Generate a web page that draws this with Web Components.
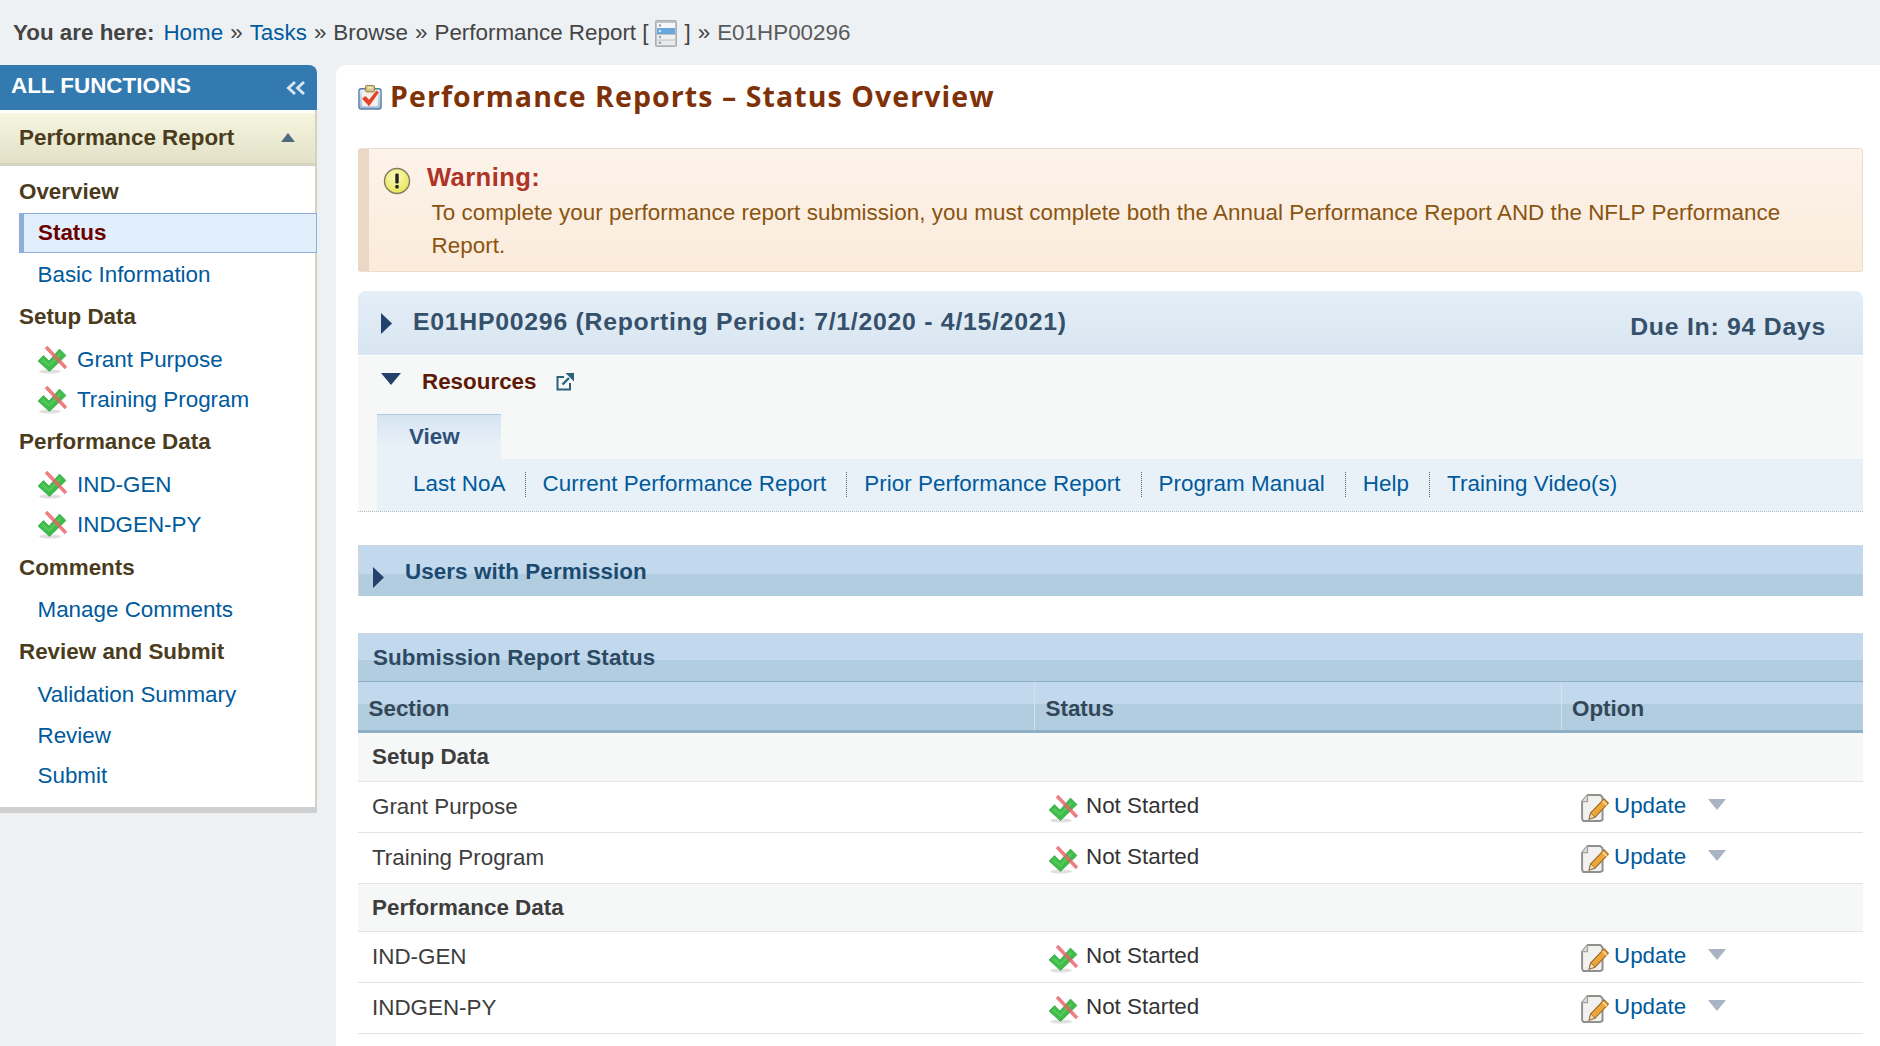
<!DOCTYPE html>
<html lang="en"><head><meta charset="utf-8"><title>Performance Reports</title>
<style>
html,body{margin:0;height:100%}
body{background:#edf1f4;font:22.4px/1.3 "Liberation Sans",Arial,sans-serif;color:#3b3b3b;overflow:hidden}
</style></head><body>
<app-page></app-page>
<script>
const ICONS={
 status:`<svg viewBox="0 0 30 28" width="30" height="28" style="filter:blur(.3px)"><ellipse cx="13" cy="25.500" rx="11" ry="2" fill="#000" opacity=".12"/><path d="M1 15l5.500-5.500 5.500 5.500L22.500 3l6.500 6.500L12.500 25.500z" fill="#3cbc49" stroke="#2f9a3c" stroke-width=".6"/><path d="M4 15l2.500-2.500 5.500 5.500L22.500 6.500l2 2L12.500 21z" fill="#5ccc5e" opacity=".7"/><path d="M9 1l20 21" stroke="#e8636a" stroke-width="3.600" opacity=".82"/></svg>`,
 edit:`<svg viewBox="2 1 26 26" width="28" height="28"><path d="M8 2h12l2 2v21l-2 1H4l-1-2V8z" fill="#f1f1ef" stroke="#8f8f8b" stroke-width="1.8" stroke-linejoin="round"/><path d="M8 2v6H3" fill="#ddd" stroke="#a2a29e" stroke-width="1.2"/><path d="M11 18.500l12.500-13 4 4-12.500 13-5.500 1.700z" fill="#eca63a" stroke="#9c6b2a" stroke-width="1"/><path d="M9.500 24.500l1.500-6 4 4z" fill="#f3dcb5" stroke="#8b6a3a" stroke-width=".8"/><path d="M22 7.500l4 4" stroke="#fbe1a6" stroke-width="1.300"/></svg>`,
 clip:`<svg viewBox="0 0 26 28" width="24" height="26"><defs><linearGradient id="cb" x1="0" y1="0" x2="0" y2="1"><stop offset="0" stop-color="#e3ecf6"/><stop offset="1" stop-color="#9db8d8"/></linearGradient></defs><rect x="1" y="5" width="24" height="22" rx="2.500" fill="url(#cb)" stroke="#5a7fa6" stroke-width="1.500"/><rect x="4.500" y="7" width="17" height="17" fill="#f8f0ea"/><rect x="8" y="1.500" width="10" height="7" rx="1.500" fill="#d7c27e" stroke="#8a7a45"/><rect x="10.500" y="3" width="5" height="2" fill="#f4ebc7"/><path d="M4.500 16l3.500-3 4 4 8-10 2.500 2-10.500 15z" fill="#e2412a"/></svg>`,
 warn:`<svg viewBox="0 0 28 28" width="28" height="28"><defs><radialGradient id="w" cx=".45" cy=".35" r=".7"><stop offset="0" stop-color="#fbfbc0"/><stop offset="1" stop-color="#e7e34f"/></radialGradient></defs><circle cx="14" cy="14" r="12.500" fill="url(#w)" stroke="#7d7d62" stroke-width="1.400"/><rect x="12.300" y="6.500" width="3.400" height="10" rx="1.200" fill="#222"/><rect x="12.300" y="18" width="3.400" height="3.400" rx="1" fill="#222"/></svg>`,
 list:`<svg viewBox="0 0 22 27" width="22" height="27"><rect x=".5" y=".5" width="21" height="26" rx="1" fill="#bcc2c6" stroke="#a8aeb2"/><rect x="2" y="3" width="18" height="5" fill="#f6f7f8"/><rect x="2" y="8" width="18" height="6" fill="#67a6de"/><rect x="2" y="15" width="18" height="4.500" fill="#eef0f1"/><rect x="2" y="20.500" width="18" height="4.500" fill="#e8eaeb"/><g fill="#9aa0a4"><circle cx="5" cy="5.500" r="1.200"/><circle cx="5" cy="11" r="1.200" fill="#dbe9f6"/><circle cx="5" cy="17" r="1.200"/><circle cx="5" cy="22.700" r="1.200"/></g></svg>`,
 ext:`<svg viewBox="0 0 18 18" width="18" height="18"><path d="M8 4H1.500v12.500H14V10" fill="none" stroke="#2b6179" stroke-width="2"/><path d="M6.500 11.500L13 5" stroke="#2b6179" stroke-width="2.400"/><path d="M9.500 0H18v8.500z" fill="#2b6179"/></svg>`,
 right:`<svg viewBox="0 0 11 21" width="11" height="21"><path d="M0 0l11 10.500L0 21z" fill="#24416b"/></svg>`,
 down:`<svg viewBox="0 0 20 12" width="20" height="12"><path d="M0 0h20L10 12z" fill="#24416b"/></svg>`,
 up:`<svg viewBox="0 0 14 9" width="14" height="9"><path d="M7 0l7 9H0z" fill="#4f6a80"/></svg>`,
 caret:`<svg viewBox="0 0 18 11" width="18" height="11"><path d="M0 0h18L9 11z" fill="#a8b3c3"/></svg>`,
 dbl:`<svg viewBox="0 0 20 14" width="20" height="14"><path d="M9 1L2.500 7 9 13M18 1l-6.500 6 6.500 6" fill="none" stroke="#dbe7f1" stroke-width="2.800"/></svg>`
};
function def(name,css,html){
  customElements.define(name,class extends HTMLElement{
    constructor(){super();const s=this.attachShadow({mode:'open'});
      s.innerHTML=`<style>${css}</style>`+(typeof html==='function'?html(this):html);}
  });
}
def('x-icon',`:host{display:inline-flex;flex:none;line-height:0}`,el=>ICONS[el.getAttribute('name')]||'');

def('bread-crumb',`:host{display:flex;align-items:center;height:65px;padding:1px 0 0 13px;box-sizing:border-box;white-space:pre;color:#444}
 b{color:#444;margin-right:9px} a{color:#005a9c} .s{margin:0 7px 0 7px} x-icon{margin:0 8px 0 6px}`,
 `<b>You are here:</b><a>Home</a><span class="s">»</span><a>Tasks</a><span class="s">»</span><span>Browse</span><span class="s">»</span><span>Performance Report [</span><x-icon name="list"></x-icon><span>]</span><span class="s">»</span><span style="color:#5a5a5a">E01HP00296</span>`);

def('nav-row',`:host{display:flex;align-items:center;box-sizing:border-box;height:var(--h,40px);white-space:nowrap}
 :host([kind=head]){padding-left:19px;font-weight:700;color:#4a3c1c}
 :host([kind=link]){padding-left:37.500px;color:#005a9c}
 :host([kind=task]){padding-left:37px;color:#005a9c}
 :host([kind=task]) x-icon{margin-right:10px}
 :host([kind=current]){margin-left:19px;margin-right:-2px;padding-left:14px;border:1px solid #8eaedb;border-left-width:5px;background:#e1eefb;color:#6b0000;font-weight:700}`,
 el=>(el.getAttribute('kind')==='task'?'<x-icon name="status"></x-icon>':'')+'<slot></slot>');

def('side-bar',`:host{display:block;width:317px;flex:none}
 .top{display:flex;align-items:center;justify-content:space-between;height:45px;box-sizing:border-box;padding:0 11px;background:#337ab0;color:#fff;font-weight:700;border-radius:0 8px 0 0}
 .top span{position:relative;top:-2px}
 .wrap{border-right:2px solid #d5d3bf;background:#fff;padding-top:3px}
 .acc{display:flex;align-items:center;justify-content:space-between;height:53px;box-sizing:border-box;padding:1px 20px 2px 19px;font-weight:700;color:#4a3c1c;border-bottom:3px solid #d5d3bf;background:linear-gradient(#f6f5df,#e2e1c8)}
 .list{padding:4px 0 11px;}
 .end{height:6px;background:#cfcfcf}`,
 `<div class="top"><span>ALL FUNCTIONS</span><x-icon name="dbl"></x-icon></div>
 <div class="wrap"><div class="acc"><span>Performance Report</span><x-icon name="up"></x-icon></div>
 <div class="list"><slot></slot></div></div><div class="end"></div>`);

def('page-title',`:host{display:flex;align-items:center;height:36px;font:700 28.500px/36px "Open Sans",sans-serif;letter-spacing:1.080px;color:#7f3208;white-space:nowrap}
 x-icon{margin:4px 8px 0 0}
 span{position:relative;top:1px}`,`<x-icon name="clip"></x-icon><span><slot></slot></span>`);

def('warn-box',`:host{display:flex;box-sizing:border-box;height:124px;margin-top:35px;background:linear-gradient(#fcf3ea,#fbebdb);border:1px solid #eddcca;border-left:11px solid #ead7c6;border-radius:3px;color:#8a5410}
 x-icon{margin:18px 15px 0 14px}
 .c{padding-top:12px}
 h3{margin:0 0 3px 1px;font:700 25.600px/33px "Liberation Sans",sans-serif;color:#ad3427;letter-spacing:.4px}
 p{margin:0 58px 0 5.500px;line-height:32.500px;letter-spacing:.05px}`,
 `<x-icon name="warn"></x-icon><div class="c"><h3>Warning:</h3><p><slot></slot></p></div>`);

def('period-bar',`:host{display:flex;align-items:center;box-sizing:border-box;height:64px;margin-top:19px;padding:0 37px 0 23px;background:linear-gradient(#e4eef7,#d8e5f0);border-radius:8px 8px 0 0;font-weight:700;font-size:24.800px;color:#35506b;letter-spacing:.74px;white-space:nowrap}
 x-icon{margin-right:21px} span{position:relative;top:-1px} .r{margin-left:auto;top:4px}`,
 `<x-icon name="right"></x-icon><span><slot></slot></span><span class="r"><slot name="right"></slot></span>`);

def('res-panel',`:host{display:block;box-sizing:border-box;height:156px;margin-top:1px;background:#f6f8f8;border-bottom:1px dotted #bbb}
 .h{display:flex;align-items:center;height:58px;padding-left:23px;box-sizing:border-box;padding-bottom:6px;font-weight:700;color:#5d1a07}
 .h span{margin:0 19px 0 21px}
 .h x-icon:first-child{position:relative;top:-3px}
 .tab{margin-left:19px;width:124px;height:45px;box-sizing:border-box;border-top:1px solid #b0cbe0;background:linear-gradient(#d5e3f1,#e9f1f8 70%);padding-left:32px;line-height:44px;font-weight:700;color:#2f5077}
 .bar{margin-left:19px;height:52px;box-sizing:border-box;padding:0 0 2px 36px;background:#e9f1f8;display:flex;align-items:center}`,
 `<div class="h"><x-icon name="down"></x-icon><span>Resources</span><x-icon name="ext"></x-icon></div><div class="tab">View</div><div class="bar"><slot></slot></div>`);

def('res-link',`:host{display:flex;align-items:center;height:25px;color:#005a9c;white-space:nowrap;padding:0 20px 0 17px;border-right:1px dotted #666;letter-spacing:.05px}
 :host(:first-of-type){padding-left:0;padding-right:19px}:host(:last-of-type){border-right:0}`,`<slot></slot>`);

def('band-bar',`:host{display:flex;align-items:center;box-sizing:border-box;height:51px;background:linear-gradient(#c2d8ec 0 56%,#b2cde0 56%);border-top:1px solid #cfd8df;font-weight:700;white-space:nowrap}
 :host([variant=users]){margin-top:33px;border-left:1px solid #d5d5d5;color:#1b4a70;padding-left:14px;letter-spacing:.08px}
 :host([variant=users]) x-icon{margin:12px 21px 0 0}
 :host([variant=users]) span{margin-top:1px}
 :host([variant=sub]){margin-top:37px;height:49px;padding-left:15px;color:#2c4a63;border-bottom:1px solid #8fafc6;letter-spacing:.1px}`,
 el=>(el.getAttribute('variant')==='users'?'<x-icon name="right"></x-icon>':'')+'<span><slot></slot></span>');

const COLS='grid-template-columns:677px 527px 1fr;';
def('status-head',`:host{display:grid;${COLS}grid-template-rows:48px;height:51px;box-sizing:border-box;background:linear-gradient(#c2d8ec 0 45%,#b2cde0 45%);border-bottom:3px solid #8fafc6;font-weight:700;color:#33475a}
 div{padding-left:10.500px;border-right:1px solid #d5e3ee;line-height:48px}div:last-child{border:0;padding-left:10px}
 span{position:relative;top:3px}`,
 `<div><span>Section</span></div><div><span>Status</span></div><div><span>Option</span></div>`);
def('status-group',`:host{display:flex;align-items:center;height:var(--h,49px);box-sizing:border-box;padding-left:14px;background:#f6f8f8;border-bottom:1px solid #e3e3e3;font-weight:700;color:#3d3d3d}`,`<slot></slot>`);
def('status-row',`:host{display:grid;${COLS}align-items:center;height:51px;box-sizing:border-box;border-bottom:1px solid #e3e3e3;color:#3d3d3d}
 .a{padding-left:14px}
 .b{display:flex;align-items:center;padding-left:13px;color:#333}
 .b x-icon{margin:3px 8px 0 0}
 .b span,.o span{position:relative;top:-1px}
 .o{display:flex;align-items:center;padding-left:19px;color:#005a9c}
 .o x-icon:first-child{margin:2px 5px 0 0}
 .o x-icon:last-child{margin:-5px 0 0 22px}`,
 el=>`<div class="a"><slot></slot></div><div class="b"><x-icon name="status"></x-icon><span>Not Started</span></div><div class="o"><x-icon name="edit"></x-icon><span>Update</span><x-icon name="caret"></x-icon></div>`);

def('main-panel',`:host{display:block;flex:1;min-width:0;background:#fff;border-radius:10px 0 0 0;padding:12px 17px 0 22px;box-sizing:border-box;height:981px}`,`<slot></slot>`);

def('app-page',`:host{display:block;width:1880px;height:1046px;overflow:hidden}
 .cols{display:flex;gap:19px;align-items:flex-start}`,
 `<bread-crumb></bread-crumb>
 <div class="cols">
 <side-bar>
  <nav-row kind="head" style="--h:43px">Overview</nav-row>
  <nav-row kind="current" style="--h:40px">Status</nav-row>
  <nav-row kind="link" style="--h:43px">Basic Information</nav-row>
  <nav-row kind="head" style="--h:42px">Setup Data</nav-row>
  <nav-row kind="task" style="--h:40px;margin-top:2px">Grant Purpose</nav-row>
  <nav-row kind="task" style="--h:40px">Training Program</nav-row>
  <nav-row kind="head" style="--h:44px">Performance Data</nav-row>
  <nav-row kind="task" style="--h:40px;margin-top:1px">IND-GEN</nav-row>
  <nav-row kind="task" style="--h:40px">INDGEN-PY</nav-row>
  <nav-row kind="head" style="--h:46px">Comments</nav-row>
  <nav-row kind="link" style="--h:37px">Manage Comments</nav-row>
  <nav-row kind="head" style="--h:46px;padding-top:2px">Review and Submit</nav-row>
  <nav-row kind="link" style="--h:41px">Validation Summary</nav-row>
  <nav-row kind="link" style="--h:41px">Review</nav-row>
  <nav-row kind="link" style="--h:40px">Submit</nav-row>
 </side-bar>
 <main-panel>
  <page-title>Performance Reports – Status Overview</page-title>
  <warn-box>To complete your performance report submission, you must complete both the Annual Performance Report AND the NFLP Performance Report.</warn-box>
  <period-bar>E01HP00296 (Reporting Period: 7/1/2020 - 4/15/2021)<span slot="right">Due In: 94 Days</span></period-bar>
  <res-panel><res-link>Last NoA</res-link><res-link>Current Performance Report</res-link><res-link>Prior Performance Report</res-link><res-link>Program Manual</res-link><res-link>Help</res-link><res-link>Training Video(s)</res-link></res-panel>
  <band-bar variant="users">Users with Permission</band-bar>
  <band-bar variant="sub">Submission Report Status</band-bar>
  <status-head></status-head>
  <status-group>Setup Data</status-group>
  <status-row>Grant Purpose</status-row>
  <status-row>Training Program</status-row>
  <status-group style="--h:48px">Performance Data</status-group>
  <status-row>IND-GEN</status-row>
  <status-row>INDGEN-PY</status-row>
 </main-panel>
 </div>`);
</script>
</body></html>
